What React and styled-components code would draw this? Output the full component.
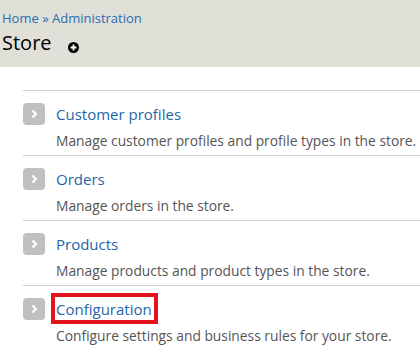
import styled, { createGlobalStyle } from "styled-components";

const GlobalStyle = createGlobalStyle`
  body {
    margin: 0;
    background: #fff;
    font-family: "Open Sans", "DejaVu Sans", sans-serif;
  }
`;

const items = [
  {
    title: "Customer profiles",
    text: "Manage customer profiles and profile types in the store.",
  },
  { title: "Orders", text: "Manage orders in the store." },
  { title: "Products", text: "Manage products and product types in the store." },
  {
    title: "Configuration",
    text: "Configure settings and business rules for your store.",
    marked: true,
  },
];

export default function App() {
  return (
    <>
      <GlobalStyle />
      <Header>
        <Breadcrumb>
          <a href="#">Home</a> » <a href="#">Administration</a>
        </Breadcrumb>
        <TitleRow>
          <h1>Store</h1>
          <PlusIcon viewBox="0 0 12 12">
            <circle cx="6" cy="6" r="6" fill="#000" />
            <path d="M6 2.8v6.4M2.8 6h6.4" stroke="#fff" strokeWidth="2" />
          </PlusIcon>
        </TitleRow>
      </Header>
      <AdminList>
        {items.map((item) => (
          <Item key={item.title}>
            <Arrow viewBox="0 0 22 22">
              <rect width="22" height="22" rx="4" fill="#c0c0c0" />
              <path
                d="M9.5 7.5l3.5 3.5-3.5 3.5"
                fill="none"
                stroke="#fff"
                strokeWidth="2.2"
              />
            </Arrow>
            <div>
              <ItemLink href="#" $marked={item.marked}>
                {item.title}
              </ItemLink>
              <Description>{item.text}</Description>
            </div>
          </Item>
        ))}
      </AdminList>
    </>
  );
}

const Header = styled.div`
  background: #e0e0d8;
  height: 67px;
  padding: 10px 0 0 2px;
  box-sizing: border-box;

  a {
    color: #2a6db0;
    text-decoration: none;
  }
`;

const Breadcrumb = styled.div`
  font-size: 13px;
  line-height: 16px;
  color: #2a6db0;
`;

const TitleRow = styled.div`
  display: flex;
  align-items: flex-end;
  gap: 16px;
  margin-top: 3px;

  h1 {
    margin: 0;
    font-size: 20px;
    font-weight: 400;
    line-height: 28px;
    color: #000;
  }
`;

const PlusIcon = styled.svg`
  width: 11px;
  height: 11px;
  margin-bottom: 4px;
`;

const AdminList = styled.div`
  margin: 23px 0 0 23px;
`;

const Item = styled.div`
  display: flex;
  gap: 11px;
  height: 65px;
  padding-top: 12px;
  box-sizing: border-box;
  border-top: 1px solid #d0d0d0;
`;

const Arrow = styled.svg`
  width: 22px;
  height: 22px;
  flex: none;
`;

const ItemLink = styled.a`
  position: relative;
  display: inline-block;
  font-size: 15px;
  line-height: 16px;
  color: #1f66a6;
  text-decoration: none;

  &::after {
    content: "";
    display: ${(p) => (p.$marked ? "block" : "none")};
    position: absolute;
    top: -8px;
    bottom: -7px;
    left: -5px;
    right: -6px;
    border: 4px solid #e3141e;
  }
`;

const Description = styled.div`
  font-size: 13.8px;
  line-height: 18px;
  margin-top: 7px;
  color: #555;
`;
